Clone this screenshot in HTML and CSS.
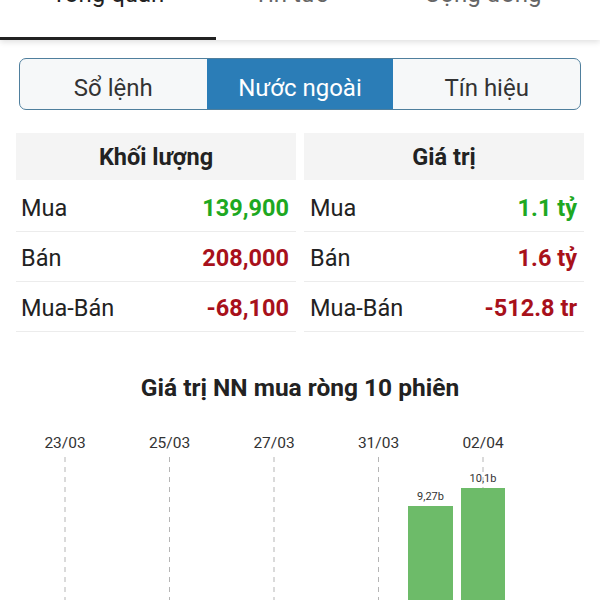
FILE: index.html
```html
<!DOCTYPE html>
<html lang="vi">
<head>
    <meta charset="UTF-8">
    <title>Nước ngoài</title>
    <meta name="viewport" content="width=device-width, initial-scale=1.0">
    <link rel="stylesheet" href="styles.css">
</head>
<body>
    <div class="tabbar">
        <div class="tab tab-first active"><span>Tổng quan</span></div>
        <div class="tab tab-second"><span>Tin tức</span></div>
        <div class="tab tab-third"><span>Cộng đồng</span></div>
    </div>

    <div class="segment">
        <button>Sổ lệnh</button>
        <button class="selected">Nước ngoài</button>
        <button>Tín hiệu</button>
    </div>

    <div class="stats">
        <div class="stat-table">
            <div class="stat-head">Khối lượng</div>
            <div class="stat-row"><span>Mua</span><b class="up">139,900</b></div>
            <div class="stat-row"><span>Bán</span><b class="down">208,000</b></div>
            <div class="stat-row"><span>Mua-Bán</span><b class="down">-68,100</b></div>
        </div>
        <div class="stat-table">
            <div class="stat-head">Giá trị</div>
            <div class="stat-row"><span>Mua</span><b class="up">1.1 tỷ</b></div>
            <div class="stat-row"><span>Bán</span><b class="down">1.6 tỷ</b></div>
            <div class="stat-row"><span>Mua-Bán</span><b class="down">-512.8 tr</b></div>
        </div>
    </div>

    <h2 class="chart-title">Giá trị NN mua ròng 10 phiên</h2>

    <div class="chart">
        <svg width="600" height="200" viewBox="0 0 600 200">
            <g class="grid">
                <line x1="65" y1="37" x2="65" y2="200"/>
                <line x1="169.5" y1="37" x2="169.5" y2="200"/>
                <line x1="274" y1="37" x2="274" y2="200"/>
                <line x1="378.5" y1="37" x2="378.5" y2="200"/>
                <line x1="483" y1="37" x2="483" y2="200"/>
            </g>
            <g class="dates">
                <text x="65" y="28">23/03</text>
                <text x="169.5" y="28">25/03</text>
                <text x="274" y="28">27/03</text>
                <text x="378.5" y="28">31/03</text>
                <text x="483" y="28">02/04</text>
            </g>
            <rect class="bar" x="408" y="86" width="45" height="120"/>
            <rect class="bar" x="461" y="68" width="44" height="140"/>
            <g class="values">
                <text x="430.5" y="80">9,27b</text>
                <text x="483" y="62">10,1b</text>
            </g>
        </svg>
    </div>
</body>
</html>
```

FILE: styles.css
```css
body {
    margin: 0;
    background: #fff;
    font-family: Roboto, 'Liberation Sans', sans-serif;
    color: #222;
    overflow: hidden;
}

/* top tabs, scrolled so only the bottom is visible */
.tabbar {
    display: flex;
    height: 40px;
    box-shadow: 0 2px 6px rgba(0,0,0,0.13);
}
.tab {
    height: 40px;
    box-sizing: border-box;
    display: flex;
    justify-content: center;
    align-items: flex-start;
    font-size: 24px;
    color: #666;
}
.tab span {
    margin-top: -20px;
    line-height: 28px;
}
.tab-first { width: 216px; }
.tab-second { width: 150px; }
.tab-third { width: 234px; }
.tab.active {
    color: #222;
    border-bottom: 3px solid #222;
}

.segment {
    margin: 18px 19px 0;
    height: 52px;
    box-sizing: border-box;
    border: 1px solid #4f7f9d;
    border-radius: 7px;
    overflow: hidden;
    display: grid;
    grid-template-columns: 1fr 1fr 1fr;
    background: #f6f8f9;
}
.segment button {
    border: none;
    background: transparent;
    font-family: inherit;
    font-size: 24px;
    color: #333;
    padding: 8px 0 0;
}
.segment .selected {
    background: #2b7db7;
    color: #fff;
}

.stats {
    margin-top: 23px;
    padding: 0 16px;
    display: grid;
    grid-template-columns: 1fr 1fr;
    gap: 8px;
}
.stat-head {
    height: 47px;
    line-height: 49px;
    margin-bottom: 2px;
    background: #f4f4f4;
    text-align: center;
    font-size: 23.5px;
    font-weight: bold;
}
.stat-row {
    height: 50px;
    box-sizing: border-box;
    border-bottom: 1px solid #ececec;
    display: flex;
    align-items: center;
    justify-content: space-between;
    padding: 2px 7px 0 5px;
    font-size: 23.5px;
}
.stat-table + .stat-table .stat-row {
    padding-left: 6px;
}
.stat-row b {
    font-size: 23.5px;
}
.up { color: #1ea822; }
.down { color: #a8111b; }

.chart-title {
    margin: 42px 0 0;
    text-align: center;
    font-size: 24.5px;
    line-height: 28px;
    font-weight: bold;
}

.chart {
    margin-top: 18px;
}
.chart svg {
    display: block;
}
.grid line {
    stroke: #b5b5b5;
    stroke-width: 1;
    stroke-dasharray: 5 5;
}
.dates text {
    font-family: Roboto, sans-serif;
    font-size: 15.5px;
    fill: #333;
    text-anchor: middle;
}
.values text {
    font-family: Roboto, sans-serif;
    font-size: 11px;
    fill: #333;
    text-anchor: middle;
}
.bar {
    fill: #6dbb69;
}
```
